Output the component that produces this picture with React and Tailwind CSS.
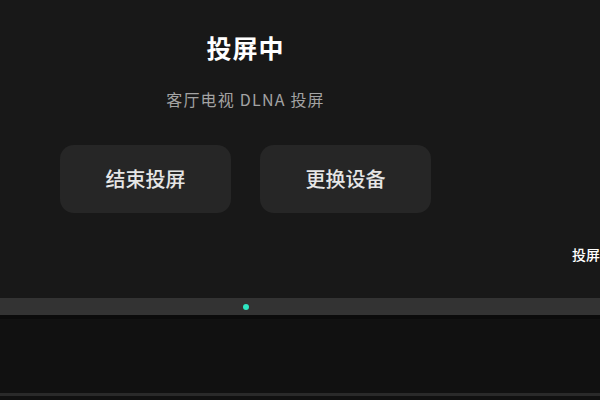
export default function App() {
  const font = { fontFamily: '"Noto Sans CJK SC", "Noto Sans", sans-serif' };
  return (
    <div className="w-[600px] h-[400px] bg-[#181818] overflow-hidden flex flex-col" style={font}>
      <div className="relative h-[298px] flex flex-col">
        <div className="w-[491px] flex flex-col items-center">
          <h1 className="mt-[30px] text-[25px] leading-[34px] font-bold text-white tracking-[1px]">投屏中</h1>
          <p className="mt-[24px] text-[16px] leading-[22px] text-[#a3a3a3] tracking-[1.2px]">客厅电视 DLNA 投屏</p>
        </div>
        <div className="mt-[35px] flex gap-[29px] pl-[60px]">
          <button className="w-[171px] h-[68px] rounded-[14px] bg-[#262626] text-[20px] font-medium text-[#e6e6e6]">
            结束投屏
          </button>
          <button className="w-[171px] h-[68px] rounded-[14px] bg-[#262626] text-[20px] font-medium text-[#e6e6e6]">
            更换设备
          </button>
        </div>
        <div className="absolute left-[572px] top-[245px] text-[14px] leading-[18px] font-medium text-white whitespace-nowrap">
          投屏
        </div>
      </div>
      <div className="h-[17px] bg-[#333333] flex items-center">
        <div className="ml-[243px] w-[6px] h-[6px] rounded-full bg-[#2ee6c2]" />
      </div>
      <div className="h-[4px] bg-[#0b0b0b]" />
      <div className="h-[74px] bg-[#111111]" />
      <div className="h-[3px] bg-[#2a2a2a]" />
      <div className="flex-1 bg-[#111111]" />
    </div>
  );
}
